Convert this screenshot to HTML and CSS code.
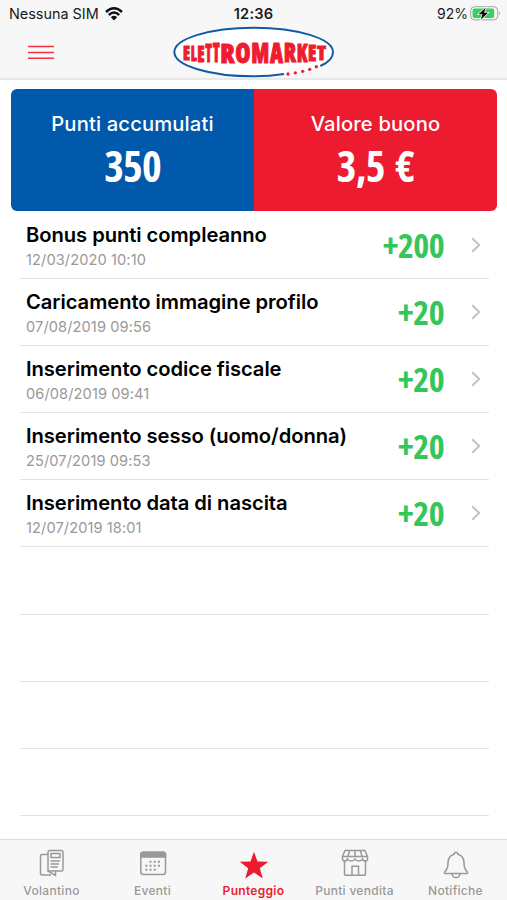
FILE: index.html
```
<!DOCTYPE html>
<html lang="it">
<head>
    <meta charset="utf-8">
    <title>Punteggio</title>
    <link rel="stylesheet" href="styles.css">
</head>

<body>
    <header>
        <div class="status">
            <div class="carrier">
                <span>Nessuna SIM</span>
                <svg class="wifi" viewBox="0 0 18 14">
                    <path d="M1 5 Q9 -2.4 17 5" />
                    <path d="M3.8 8 Q9 3.2 14.2 8" />
                    <path class="dot" d="M5.8 10.2 Q9 7.4 12.2 10.2 L9 13.5 Z" />
                </svg>
            </div>
            <div class="time">12:36</div>
            <div class="power">
                <span>92%</span>
                <svg class="battery" viewBox="0 0 31 15">
                    <rect x="0.7" y="0.7" width="27" height="13.2" rx="4" fill="#f5f5f5" stroke="#a3a3a3" />
                    <rect x="2.6" y="2.5" width="21.5" height="9.6" rx="2" fill="#35cf5c" />
                    <path d="M29 5.2 Q31 7.2 29 9.2 Z" fill="#a3a3a3" />
                    <path d="M15.6 1.8 L8.6 8.2 H12.5 L10.8 13.4 L18 6.7 H14 Z" fill="#000" stroke="#f5f5f5" stroke-width="1.6" paint-order="stroke" />
                </svg>
            </div>
        </div>
        <nav class="navbar">
            <svg class="menu" viewBox="0 0 26 15">
                <path d="M0 1.5 H26 M0 7.5 H26 M0 13.3 H26" />
            </svg>
            <svg class="logo" viewBox="0 0 528 171">
                <ellipse cx="266" cy="90" rx="238" ry="73" fill="#fff" />
                <path d="M357 156 C326 161 297 163 266 163 C134 163 28 131 28 90 C28 50 134 17 266 17 C398 17 504 50 504 90 C504 108 490 122 466 132" fill="none" stroke="#1459a5" stroke-width="6" />
                <g class="letters">
                    <text x="54" y="115" font-size="58" textLength="21" lengthAdjust="spacingAndGlyphs">E</text>
                    <text x="77" y="117" font-size="65" textLength="18" lengthAdjust="spacingAndGlyphs">L</text>
                    <text x="97" y="119" font-size="71" textLength="22" lengthAdjust="spacingAndGlyphs">E</text>
                    <text x="121" y="120" font-size="76" textLength="20" lengthAdjust="spacingAndGlyphs">T</text>
                    <text x="143" y="121" font-size="79" textLength="21" lengthAdjust="spacingAndGlyphs">T</text>
                    <text x="166" y="122" font-size="81" textLength="43" lengthAdjust="spacingAndGlyphs">R</text>
                    <text x="211" y="122" font-size="82" textLength="46" lengthAdjust="spacingAndGlyphs">O</text>
                    <text x="259" y="122" font-size="82" textLength="54" lengthAdjust="spacingAndGlyphs">M</text>
                    <text x="315" y="122" font-size="82" textLength="39" lengthAdjust="spacingAndGlyphs">A</text>
                    <text x="356" y="121" font-size="79" textLength="37" lengthAdjust="spacingAndGlyphs">R</text>
                    <text x="395" y="119" font-size="73" textLength="32" lengthAdjust="spacingAndGlyphs">K</text>
                    <text x="429" y="117" font-size="66" textLength="25" lengthAdjust="spacingAndGlyphs">E</text>
                    <text x="456" y="115" font-size="60" textLength="27" lengthAdjust="spacingAndGlyphs">T</text>
                </g>
                <g fill="#ee1c2e">
                    <circle cx="369" cy="156" r="5" />
                    <circle cx="391" cy="152.5" r="5" />
                    <circle cx="413" cy="148" r="5" />
                    <circle cx="434" cy="142" r="5" />
                    <circle cx="454" cy="134" r="5" />
                </g>
            </svg>
        </nav>
    </header>

    <main>
        <section class="score">
            <div class="box points">
                <h2>Punti accumulati</h2>
                <p class="num">350</p>
            </div>
            <div class="box voucher">
                <h2>Valore buono</h2>
                <p class="num">3,5 €</p>
            </div>
        </section>

        <ul class="history">
            <li>
                <div class="info">
                    <h3>Bonus punti compleanno</h3>
                    <p>12/03/2020 10:10</p>
                </div>
                <span class="num">+200</span>
                <svg class="chevron" viewBox="0 0 10 16"><path d="M1.2 1.2 L8.2 8 L1.2 14.8" /></svg>
            </li>
            <li>
                <div class="info">
                    <h3>Caricamento immagine profilo</h3>
                    <p>07/08/2019 09:56</p>
                </div>
                <span class="num">+20</span>
                <svg class="chevron" viewBox="0 0 10 16"><path d="M1.2 1.2 L8.2 8 L1.2 14.8" /></svg>
            </li>
            <li>
                <div class="info">
                    <h3>Inserimento codice fiscale</h3>
                    <p>06/08/2019 09:41</p>
                </div>
                <span class="num">+20</span>
                <svg class="chevron" viewBox="0 0 10 16"><path d="M1.2 1.2 L8.2 8 L1.2 14.8" /></svg>
            </li>
            <li>
                <div class="info">
                    <h3>Inserimento sesso (uomo/donna)</h3>
                    <p>25/07/2019 09:53</p>
                </div>
                <span class="num">+20</span>
                <svg class="chevron" viewBox="0 0 10 16"><path d="M1.2 1.2 L8.2 8 L1.2 14.8" /></svg>
            </li>
            <li>
                <div class="info">
                    <h3>Inserimento data di nascita</h3>
                    <p>12/07/2019 18:01</p>
                </div>
                <span class="num">+20</span>
                <svg class="chevron" viewBox="0 0 10 16"><path d="M1.2 1.2 L8.2 8 L1.2 14.8" /></svg>
            </li>
            <li></li>
            <li></li>
            <li></li>
            <li></li>
        </ul>
    </main>

    <footer class="tabs">
        <div class="tab">
            <svg viewBox="0 0 30 30">
                <path d="M11 5.5 H5 Q3.5 5.5 3.5 7 V24.5 Q3.5 26 5 26 H14" />
                <path d="M12.5 1.5 H24.5 Q26 1.5 26 3 V20.5 Q26 22 24.5 22 H18.5 V26.5 L11 22 V3 Q11 1.5 12.5 1.5 Z" />
                <path d="M11.5 22 H18.5" />
                <rect x="14" y="4.5" width="9" height="4" />
                <path d="M13.5 12 H23 M13.5 15 H22 M13.5 18 H21" />
            </svg>
            <span>Volantino</span>
        </div>
        <div class="tab">
            <svg viewBox="0 0 30 30">
                <rect x="2.8" y="3.2" width="24.7" height="22.3" rx="2.5" />
                <path class="solid" d="M2.8 8 V5.5 Q2.8 3.2 5 3.2 H25.3 Q27.5 3.2 27.5 5.5 V8 Z" />
                <path class="days" d="M11.5 12.8 H24 M7.3 16.8 H24 M7.3 20.8 H20" />
            </svg>
            <span>Eventi</span>
        </div>
        <div class="tab active">
            <svg viewBox="0 0 30 30">
                <path class="solid" d="M15 2.8 L18.5 12.4 L29.3 12.7 L20.8 19.2 L23.8 29.5 L15 23.5 L6.2 29.5 L9.2 19.2 L0.7 12.7 L11.5 12.4 Z" />
            </svg>
            <span>Punteggio</span>
        </div>
        <div class="tab">
            <svg viewBox="0 0 30 30">
                <path d="M5 1.5 H25 L27.5 7.5 V10 Q27.5 12 25.5 12 Q23 12 22.5 10 Q21.5 12 19 12 Q16 12 15 10 Q14 12 11 12 Q8.5 12 7.5 10 Q7 12 4.5 12 Q2.5 12 2.5 10 V7.5 Z" />
                <path d="M2.5 7.5 H27.5 M9.5 1.5 L8 7.5 M15 1.5 V7.5 M20.5 1.5 L22 7.5" />
                <path d="M4.5 12 V24.5 Q4.5 26.3 6.3 26.3 H23.7 Q25.5 26.3 25.5 24.5 V12 M12 26 V17.2 H18.5 V26" />
            </svg>
            <span>Punti vendita</span>
        </div>
        <div class="tab">
            <svg viewBox="0 0 30 30">
                <path d="M13.2 5.2 Q13.2 3.2 15 3.2 Q16.8 3.2 16.8 5.2 Q23 7 23 14 Q23 20.5 26.5 23 Q27 24.6 25.5 24.6 H4.5 Q3 24.6 3.5 23 Q7 20.5 7 14 Q7 7 13.2 5.2 Z" />
                <path d="M11.2 25 Q11.5 28.6 15 28.6 Q18.5 28.6 18.8 25" />
            </svg>
            <span>Notifiche</span>
        </div>
    </footer>
</body>
</html>
```

FILE: styles.css
```
* {
    box-sizing: border-box;
    margin: 0;
    padding: 0;
}

body {
    display: flex;
    flex-direction: column;
    height: 900px;
    overflow: hidden;
    background-color: #fff;
    font-family: Inter, "Liberation Sans", sans-serif;
}

header {
    height: 80px;
    background-color: #f7f7f7;
    border-bottom: 2px solid #e8e8e8;
}

.status {
    display: grid;
    grid-template-columns: 1fr auto 1fr;
    align-items: center;
    height: 27px;
    padding: 0 6px;
    font-size: 14px;
    color: #1a1a1a;
}

.carrier {
    display: flex;
    align-items: center;
    gap: 6px;
    padding-left: 3px;
    font-size: 14.4px;
}

.wifi {
    width: 18px;
    height: 14px;
    fill: none;
    stroke: #111;
    stroke-width: 2.4;
}

.wifi .dot {
    fill: #111;
    stroke: none;
}

.time {
    font-size: 14.6px;
    font-weight: 600;
    letter-spacing: 0.2px;
}

.power {
    display: flex;
    justify-content: flex-end;
    align-items: center;
    gap: 2px;
}

.battery {
    width: 31px;
    height: 15px;
}

.navbar {
    display: grid;
    grid-template-columns: 165px 176px 1fr;
    margin-top: -5px;
}

.menu {
    width: 26px;
    height: 15px;
    margin: 23px 0 0 28px;
    stroke: #ee3345;
    stroke-width: 1.6;
}

.logo {
    width: 176px;
    height: 57px;
}

.letters {
    font-family: "Open Sans", sans-serif;
    font-weight: 800;
    font-stretch: 75%;
    fill: #ee1c2e;
    stroke: #ee1c2e;
    stroke-width: 3;
}

main {
    flex: 1;
    overflow: hidden;
    padding: 9px 10px 0 11px;
}

.score {
    display: flex;
    height: 122px;
    border-radius: 6px;
    overflow: hidden;
    color: #fff;
    text-align: center;
}

.box {
    flex: 1;
    padding-top: 22px;
}

.points {
    background-color: #0059aa;
}

.voucher {
    background-color: #ed1b2f;
}

.box h2 {
    font-size: 20.2px;
    font-weight: 500;
    line-height: 26px;
    letter-spacing: 0.15px;
}

.num {
    font-family: "Open Sans", sans-serif;
    font-weight: 700;
    font-stretch: 75%;
}

.box .num {
    font-size: 42px;
    line-height: 58px;
    letter-spacing: -0.8px;
    word-spacing: 4px;
}

.history {
    list-style: none;
    margin: 0 8px 0 9px;
    padding-top: 0.5px;
}

.history li {
    display: flex;
    align-items: center;
    height: 67.2px;
    padding: 0 8px 0 6px;
    border-bottom: 1px solid #e3e3e3;
}

.info {
    flex: 1;
    padding-top: 5px;
    white-space: nowrap;
}

.info h3 {
    font-size: 20.2px;
    font-weight: 600;
    line-height: 26px;
    letter-spacing: -0.06px;
    color: #000;
}

.info p {
    font-size: 14.6px;
    line-height: 25px;
    letter-spacing: 0.1px;
    color: #999;
}

.history .num {
    font-size: 34px;
    line-height: 46px;
    letter-spacing: -0.6px;
    color: #34c65a;
}

.chevron {
    width: 10px;
    height: 16px;
    margin-left: 27px;
    fill: none;
    stroke: #c2c2c6;
    stroke-width: 2;
}

.tabs {
    display: flex;
    height: 61px;
    padding: 9px 1px 0;
    background-color: #f7f7f7;
    border-top: 1px solid #dcdcdc;
}

.tab {
    flex: 1;
    display: flex;
    flex-direction: column;
    align-items: center;
    font-size: 12px;
    font-weight: 500;
    letter-spacing: 0.3px;
    color: #999;
}

.tab svg {
    width: 30px;
    height: 30px;
    margin-bottom: 4px;
    fill: none;
    stroke: #999;
    stroke-width: 1.5;
}

.tab .solid {
    fill: #999;
}

.tab .days {
    stroke-width: 2;
    stroke-dasharray: 2 2.2;
}

.active {
    color: #ed1b2f;
    font-weight: 600;
}

.tab.active .solid {
    fill: #ed1b2f;
    stroke: none;
}
```
